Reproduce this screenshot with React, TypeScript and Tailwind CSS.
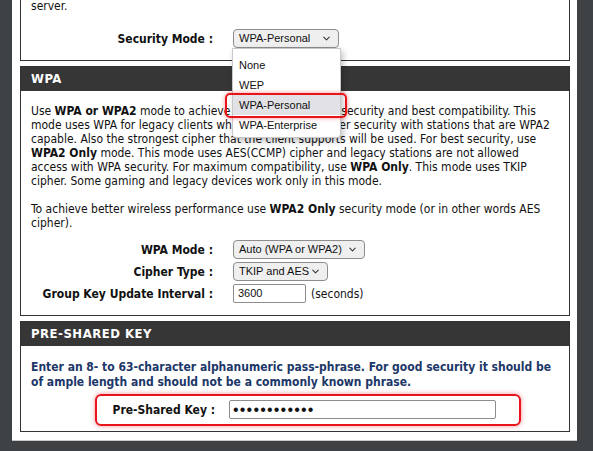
import { ChevronDown } from 'lucide-react';

const font = "font-['DejaVu_Sans_Condensed','DejaVu_Sans',sans-serif]";
const ctrlFont = "font-['Liberation_Sans',Arial,sans-serif]";

function FakeSelect({ value, width }: { value: string; width: string }) {
  return (
    <div
      className={`${width} ${ctrlFont} h-[19px] flex items-center justify-between pl-[5px] pr-[6px] bg-[#efeff0] border border-[#8d8d8d] rounded-[4px] text-[11px] text-[#111]`}
    >
      <span className="whitespace-nowrap">{value}</span>
      <ChevronDown size={11} strokeWidth={2.2} className="text-[#333]" />
    </div>
  );
}

function SectionHeader({ title }: { title: string }) {
  return (
    <div className="h-[24px] bg-[#363636] flex items-center px-[10px]">
      <span className="text-white font-bold text-[13px] tracking-[0.5px]">{title}</span>
    </div>
  );
}

export default function App() {
  return (
    <div className={`w-[593px] h-[451px] overflow-hidden bg-[#3e4244] ${font}`}>
      <div className="flex h-[441px]">
        <div className="w-[12px] shrink-0" />
        <div className="w-[565px] shrink-0 bg-white border-b border-[#c9c9c9] pl-[8px] pr-[7px] overflow-hidden">
          {/* security mode box */}
          <div className="-mt-[3px] border-x border-b border-[#333] pb-[12px]">
            <div className="h-[16px] pt-[2px] leading-[14px] pl-[10px] text-[12px] text-[#111]">server.</div>
            <div className="mt-[16px] flex items-center h-[19px]">
              <div className="w-[192px] text-right font-bold text-[12px] text-[#111]">Security Mode :</div>
              <div className="ml-[20px] relative">
                <FakeSelect value="WPA-Personal" width="w-[106px]" />
                <div
                  className={`absolute z-20 left-[-1px] top-[19px] w-[109px] h-[90px] bg-white border border-[#c8c8c8] rounded-b-[4px] shadow-[2px_3px_6px_rgba(0,0,0,0.25)] pt-[6px] text-[11px] text-[#111] ${ctrlFont}`}
                >
                  <div className="h-[20px] flex items-center px-[6px]">None</div>
                  <div className="h-[20px] flex items-center px-[6px]">WEP</div>
                  <div className="h-[20px] flex items-center px-[6px] bg-[#e2e2e6]">WPA-Personal</div>
                  <div className="h-[20px] flex items-center px-[6px]">WPA-Enterprise</div>
                  <div className="absolute left-[-8px] top-[44px] w-[122px] h-[25px] border-2 border-[#e8141c] rounded-[5px] shadow-[0_0_4px_rgba(232,20,28,0.45)]" />
                </div>
              </div>
            </div>
          </div>

          {/* WPA box */}
          <div className="mt-[5px] border border-[#333] pb-[12px]">
            <SectionHeader title="WPA" />
            <div className="pt-[13px] px-[10px] text-[12px] leading-[14px] text-[#111] whitespace-nowrap">
              <div>
                Use <b>WPA or WPA2</b> mode to achieve a balance of strong security and best compatibility. This
              </div>
              <div>mode uses WPA for legacy clients while maintaining higher security with stations that are WPA2</div>
              <div>capable. Also the strongest cipher that the client supports will be used. For best security, use</div>
              <div>
                <b>WPA2 Only</b> mode. This mode uses AES(CCMP) cipher and legacy stations are not allowed
              </div>
              <div>
                access with WPA security. For maximum compatibility, use <b>WPA Only</b>. This mode uses TKIP
              </div>
              <div>cipher. Some gaming and legacy devices work only in this mode.</div>
              <div className="h-[14px]" />
              <div>
                To achieve better wireless performance use <b>WPA2 Only</b> security mode (or in other words AES
              </div>
              <div>cipher).</div>
            </div>
            <div className="mt-[10px] flex flex-col gap-[3px] text-[12px] text-[#111]">
              <div className="flex items-center h-[19px]">
                <div className="w-[192px] text-right font-bold">WPA Mode :</div>
                <div className="ml-[20px]">
                  <FakeSelect value="Auto (WPA or WPA2)" width="w-[132px]" />
                </div>
              </div>
              <div className="flex items-center h-[19px]">
                <div className="w-[192px] text-right font-bold">Cipher Type :</div>
                <div className="ml-[20px]">
                  <FakeSelect value="TKIP and AES" width="w-[95px]" />
                </div>
              </div>
              <div className="flex items-center h-[19px]">
                <div className="w-[192px] text-right font-bold whitespace-nowrap">Group Key Update Interval :</div>
                <div
                  className={`ml-[20px] w-[73px] h-[19px] border border-[#8d8d8d] rounded-[2px] flex items-center px-[4px] text-[11px] ${ctrlFont}`}
                >
                  3600
                </div>
                <span className="ml-[5px]">(seconds)</span>
              </div>
            </div>
          </div>

          {/* pre-shared key box */}
          <div className="mt-[5px] border border-[#333] pb-[12px]">
            <SectionHeader title="PRE-SHARED KEY" />
            <div className="pt-[14px] px-[10px] text-[12px] leading-[15px] font-bold text-[#1c3768] whitespace-nowrap">
              <div>Enter an 8- to 63-character alphanumeric pass-phrase. For good security it should be</div>
              <div>of ample length and should not be a commonly known phrase.</div>
            </div>
            <div className="mt-[10px] relative flex items-center h-[19px] text-[12px] text-[#111]">
              <div className="w-[194px] text-right font-bold">Pre-Shared Key :</div>
              <div
                className={`ml-[14px] w-[267px] h-[19px] border border-[#8d8d8d] rounded-[2px] flex items-center px-[3px] text-[16px] tracking-[1.2px] leading-none ${ctrlFont}`}
              >
                ••••••••••••
              </div>
              <div className="absolute left-[74px] top-[-6px] w-[426px] h-[32px] border-2 border-[#e8141c] rounded-[6px] shadow-[0_0_5px_rgba(232,20,28,0.45)]" />
            </div>
          </div>
        </div>
        <div className="flex-1" />
      </div>
    </div>
  );
}
